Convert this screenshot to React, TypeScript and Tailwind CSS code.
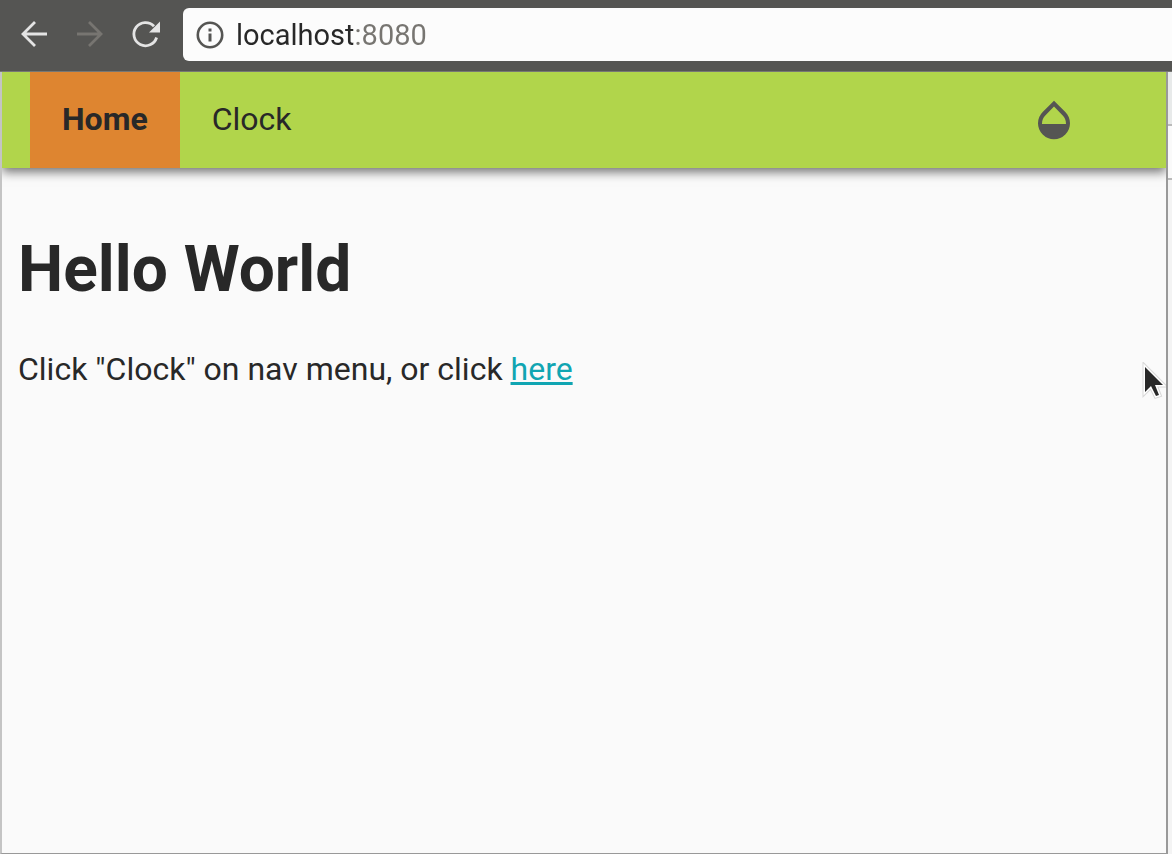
import { MdOpacity } from "react-icons/md";

function BackIcon() {
  return (
    <svg width="32" height="32" viewBox="0 0 32 32" fill="none" stroke="currentColor" strokeWidth="2.8" aria-hidden="true">
      <path d="M29 16H4.5M17 4 5 16l12 12" />
    </svg>
  );
}

function ForwardIcon() {
  return (
    <svg width="32" height="32" viewBox="0 0 32 32" fill="none" stroke="currentColor" strokeWidth="2.8" aria-hidden="true">
      <path d="M3 16h24.5M15 4l12 12-12 12" />
    </svg>
  );
}

function ReloadIcon() {
  return (
    <svg width="32" height="32" viewBox="0 0 32 32" aria-hidden="true">
      <path d="M26.6 19.5A11.6 11.6 0 1 1 24 8.3" fill="none" stroke="currentColor" strokeWidth="2.8" />
      <path d="M30 3.5v11H19z" fill="currentColor" />
    </svg>
  );
}

function InfoIcon() {
  return (
    <svg className="shrink-0" width="28" height="28" viewBox="0 0 28 28" aria-hidden="true">
      <circle cx="14" cy="14" r="12.2" fill="none" stroke="#555553" strokeWidth="2.6" />
      <path d="M12.5 7.5h3v3h-3zM12.5 12.5h3v8h-3z" fill="#555553" />
    </svg>
  );
}

function Toolbar() {
  return (
    <header className="flex h-18 items-start border-b border-[#777775] bg-[#555553] pl-[18px] pt-2">
      <div className="flex h-[52px] items-center gap-6 text-[#e4e4e4]">
        <button type="button" aria-label="Back"><BackIcon /></button>
        <button type="button" aria-label="Forward" disabled className="text-[#777571]"><ForwardIcon /></button>
        <button type="button" aria-label="Reload"><ReloadIcon /></button>
      </div>
      <div className="ml-[21px] flex h-[53px] min-w-0 flex-1 items-center gap-3 rounded-l-md bg-[#fcfcfc] pl-[13px]">
        <InfoIcon />
        <input
          type="text"
          aria-label="Address"
          defaultValue="localhost:8080"
          spellCheck={false}
          className="min-w-0 flex-1 bg-[linear-gradient(to_right,#282828_117px,#777571_117px)] bg-clip-text text-[29px] leading-10 text-transparent outline-none"
        />
      </div>
    </header>
  );
}

function Nav() {
  return (
    <nav className="relative flex h-24 items-center bg-[#b1d54b] pl-7 pr-[88px] text-[32px] leading-10 shadow-[0_4px_10px_rgba(0,0,0,0.55)]">
      <a href="#home" aria-current="page" className="flex h-full items-center bg-[#de8530] px-8 pb-0.5 font-bold">Home</a>
      <a href="#clock" className="flex h-full items-center px-8 pb-0.5">Clock</a>
      <button type="button" aria-label="Change colours" className="ml-auto text-[#555553]">
        <MdOpacity size={48} />
      </button>
    </nav>
  );
}

function Pointer() {
  return (
    <svg className="absolute right-0 top-[290px]" width="26" height="42" viewBox="0 0 26 42" aria-hidden="true">
      <path d="M5 5v25l6-6 5 10 3-1-4-10h8z" fill="none" stroke="#d8d8d8" strokeWidth="5" />
      <path d="M5 5v25l6-6 5 10 3-1-4-10h8z" fill="#282828" stroke="#fff" strokeWidth="3" paintOrder="stroke" />
    </svg>
  );
}

export default function App() {
  return (
    <div className="flex min-h-screen flex-col bg-[#fafafa] font-[Roboto,sans-serif] text-[#282828]">
      <Toolbar />
      <div className="flex flex-1">
        <div className="relative flex-1 overflow-hidden border-x-2 border-b border-l-[#c4c4c4] border-r-[#999] border-b-[#999]">
          <Nav />
          <main className="px-4 pt-[66px]">
            <h1 className="text-[64px] font-bold leading-[72px]">Hello World</h1>
            <p className="mt-[43px] text-[32px] leading-10">
              Click "Clock" on nav menu, or click <a href="#clock" className="text-[#10a5b2] underline">here</a>
            </p>
          </main>
          <Pointer />
        </div>
        <div className="flex w-1 flex-col">
          <div className="h-[54px] border-b-2 border-[#bababa] bg-[#e8eaea]" />
          <div className="h-[54px] border-b-2 border-[#bababa]" />
          <div className="flex-1 bg-[#f4f4f4]" />
        </div>
      </div>
    </div>
  );
}
